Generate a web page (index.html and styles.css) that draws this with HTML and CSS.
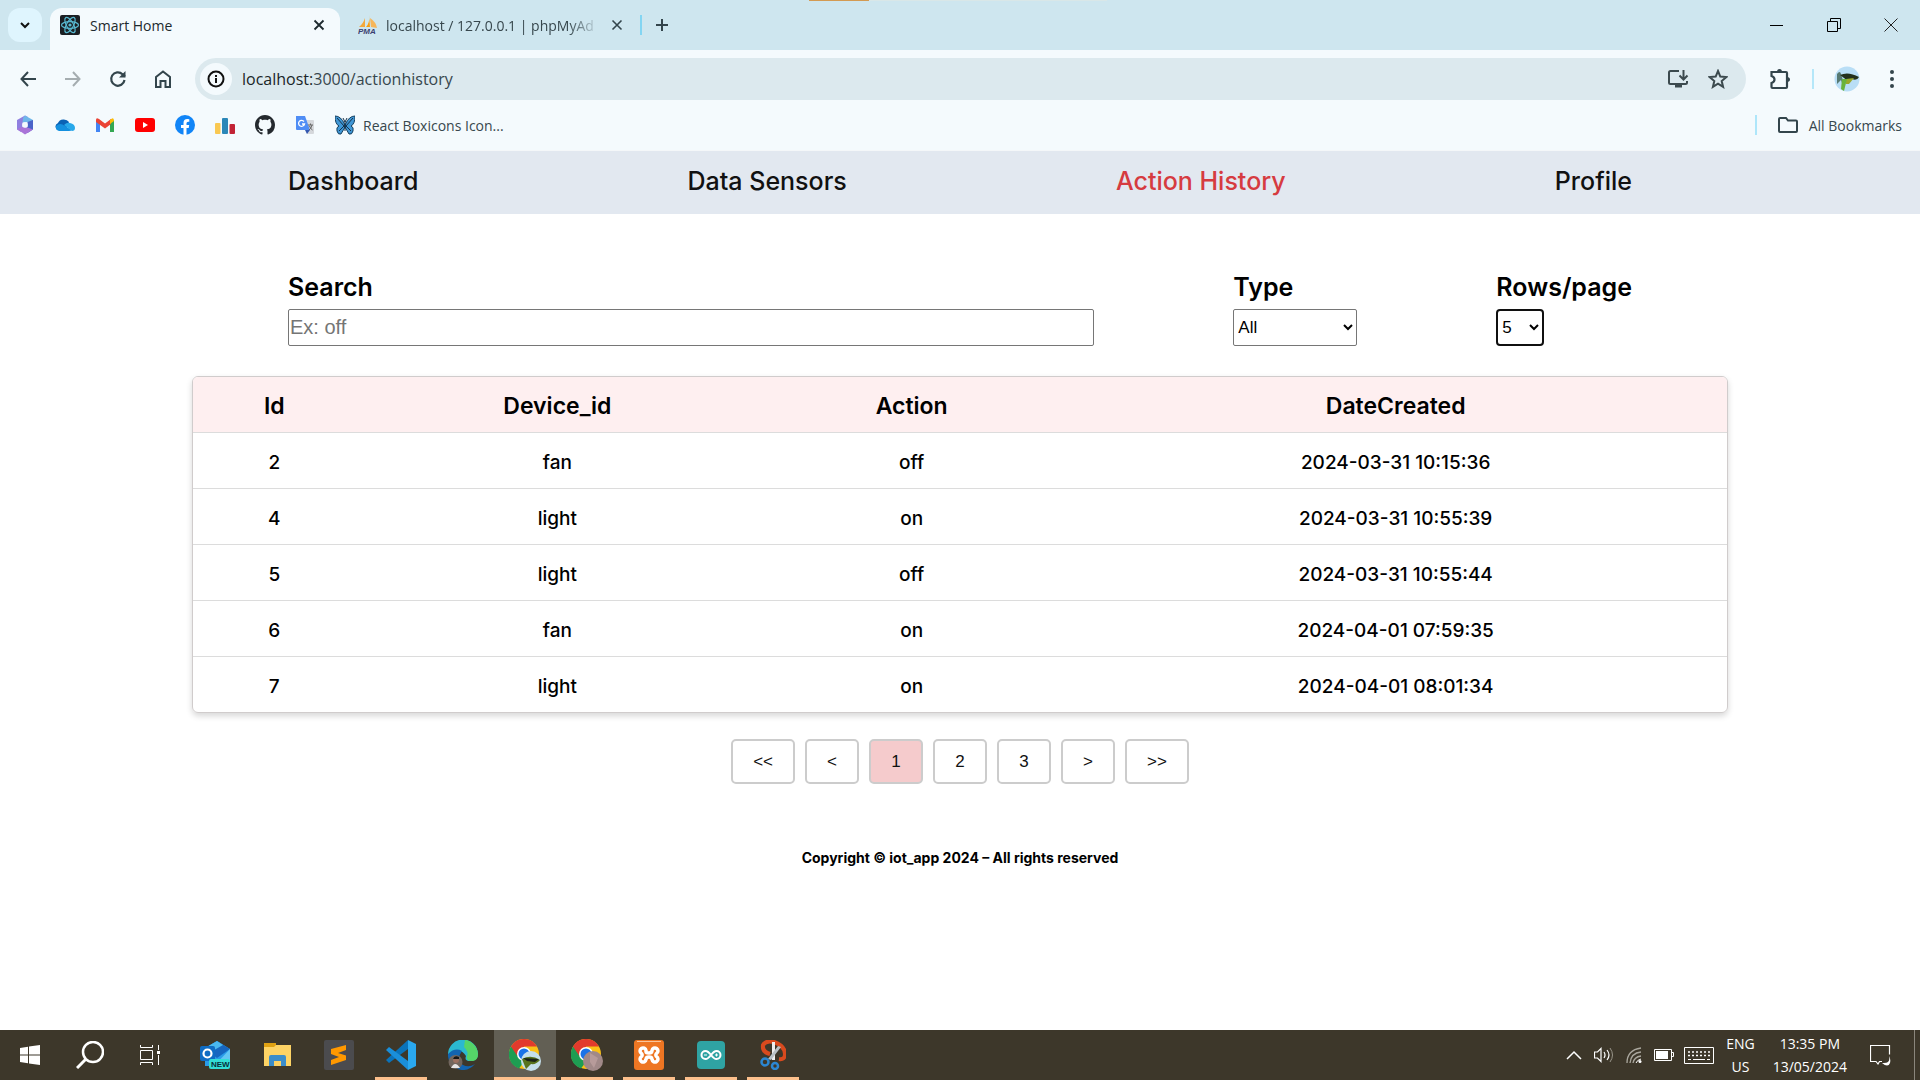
FILE: index.html
```html
<!DOCTYPE html>
<html lang="en">
<head>
<meta charset="utf-8">
<title>Smart Home</title>
<link rel="stylesheet" href="styles.css">
</head>
<body>
<header class="browser">
  <div class="tabstrip">
    <button class="tab-search" aria-label="Search tabs"><svg width="12" height="12" viewBox="0 0 12 12"><path d="M2 4l4 4 4-4" fill="none" stroke="#111" stroke-width="2"/></svg></button>
    <div class="tab tab-active">
      <svg width="20" height="20" viewBox="0 0 20 20"><rect width="20" height="20" rx="2" fill="#1b1f23"/><g fill="none" stroke="#58b9d0" stroke-width="1.2"><ellipse cx="10" cy="10" rx="8.5" ry="3.4"/><ellipse cx="10" cy="10" rx="8.5" ry="3.4" transform="rotate(60 10 10)"/><ellipse cx="10" cy="10" rx="8.5" ry="3.4" transform="rotate(120 10 10)"/></g><circle cx="10" cy="10" r="1.6" fill="#58b9d0"/></svg>
      <span class="tab-title">Smart Home</span>
      <button class="tab-close" aria-label="Close tab"><svg width="12" height="12" viewBox="0 0 12 12"><path d="M1.500 1.500l9 9M10.500 1.500l-9 9" stroke="#1d2a2e" stroke-width="1.800"/></svg></button>
    </div>
    <div class="tab">
      <svg width="20" height="20" viewBox="0 0 20 20"><path d="M7 3v9H1q4-3 6-9z" fill="#f3a83c"/><path d="M11 0q1 8-3 12h4z" fill="#f89c0e"/><path d="M12 3q6 4 7 10l-6-1z" fill="#f6b65a"/><text x="0" y="19" font-size="8" font-weight="700" font-style="italic" font-family="Liberation Sans, sans-serif" fill="#3a3f70">PMA</text></svg>
      <span class="tab-title tab-fade">localhost / 127.0.0.1 | phpMyAd</span>
      <button class="tab-close" aria-label="Close tab"><svg width="12" height="12" viewBox="0 0 12 12"><path d="M1.500 1.500l9 9M10.500 1.500l-9 9" stroke="#33454c" stroke-width="1.600"/></svg></button>
    </div>
    <span class="tab-sep"></span>
    <button class="new-tab" aria-label="New tab"><svg width="14" height="14" viewBox="0 0 14 14"><path d="M7 1v12M1 7h12" stroke="#33454c" stroke-width="2"/></svg></button>
    <div class="capture"></div>
    <div class="window-controls">
      <button aria-label="Minimize"><svg width="14" height="14" viewBox="0 0 14 14"><path d="M0 7.500h13" stroke="#000"/></svg></button>
      <button aria-label="Restore"><svg width="14" height="14" viewBox="0 0 14 14"><path d="M.5 3.500h10v10H.5zM3.500 3V.5h10v10H11" fill="none" stroke="#000"/></svg></button>
      <button aria-label="Close"><svg width="14" height="14" viewBox="0 0 14 14"><path d="M.5.5l13 13M13.500.5l-13 13" stroke="#222"/></svg></button>
    </div>
  </div>

  <div class="toolbar">
    <button class="tool" aria-label="Back"><svg width="16" height="16" viewBox="0 0 16 16"><path d="M16 8H2M8 1L1.500 8 8 15" fill="none" stroke="#33454c" stroke-width="2"/></svg></button>
    <button class="tool" aria-label="Forward"><svg width="16" height="16" viewBox="0 0 16 16"><path d="M0 8h14M8 1l6.500 7L8 15" fill="none" stroke="#a5adb0" stroke-width="2"/></svg></button>
    <button class="tool" aria-label="Reload"><svg width="18" height="18" viewBox="0 0 18 18"><path d="M15.500 10A6.700 6.700 0 1 1 13.500 4.200L16 6.500" fill="none" stroke="#33454c" stroke-width="2.200"/><path d="M16.500 1v6.500H10z" fill="#33454c"/></svg></button>
    <button class="tool" aria-label="Home"><svg width="18" height="18" viewBox="0 0 18 18"><path d="M2 7l7-5.500L16 7v10h-4.500v-6h-5v6H2z" fill="none" stroke="#33454c" stroke-width="2"/></svg></button>
    <div class="omnibox">
      <button class="site-info" aria-label="Site information"><svg width="18" height="18" viewBox="0 0 18 18"><circle cx="9" cy="9" r="7.500" fill="none" stroke="#111" stroke-width="2"/><path d="M9 8v5M9 5v2" stroke="#111" stroke-width="2"/></svg></button>
      <span class="url"><b>localhost:</b>3000/actionhistory</span>
      <button class="omni-btn" aria-label="Install app"><svg width="22" height="20" viewBox="0 0 22 20"><path d="M12 2H3.500q-1.500 0-1.500 1.500v10q0 1.500 1.500 1.500h15q1.500 0 1.500-1.500V12" fill="none" stroke="#3c4a4e" stroke-width="2"/><path d="M8 15h7v3.500H8z" fill="#3c4a4e"/><path d="M16.500 1v9M12.500 6.500l4 4 4-4" fill="none" stroke="#3c4a4e" stroke-width="2"/></svg></button>
      <button class="omni-btn" aria-label="Bookmark this tab"><svg width="20" height="20" viewBox="0 0 20 20"><path d="M10 2l2.300 5.600 6 .5-4.600 3.900 1.400 5.900-5.100-3.200-5.100 3.200L6.300 12 1.700 8.100l6-.5z" fill="none" stroke="#3c4a4e" stroke-width="2"/></svg></button>
    </div>
    <button class="extensions" aria-label="Extensions"><svg width="22" height="22" viewBox="0 0 22 22"><path d="M2.500 4h14.500q1 0 1 1v14q0 1-1 1h-13.500q-1 0-1-1v-4q3-1 3-3.500t-3-3.500z" fill="none" stroke="#33454c" stroke-width="2.200"/><path d="M8 4a2.500 3 0 0 1 5 0zM18 9a3 2.500 0 0 1 0 5z" fill="#33454c"/></svg></button>
    <span class="tool-sep"></span>
    <button class="avatar" aria-label="Profile menu"><svg width="26" height="26" viewBox="0 0 26 26"><circle cx="13" cy="13" r="12.500" fill="#b9def6"/><path d="M3 8q3-4 4 0 3 8 2 12l-2-6-4 4z" fill="#587a72"/><path d="M6 9q8-4 19 2-2 4-7 2-6 2-8-1z" fill="#23301c"/><path d="M12 13l8-1-5 6h-3z" fill="#9aa82c"/><path d="M8 13h5l-3 12-3-2z" fill="#69b33c"/></svg></button>
    <button class="menu" aria-label="Menu"><svg width="6" height="20" viewBox="0 0 6 20"><g fill="#33454c"><circle cx="3" cy="3" r="2"/><circle cx="3" cy="10" r="2"/><circle cx="3" cy="17" r="2"/></g></svg></button>
  </div>

  <div class="bookmarks">
    <a href="#" aria-label="Microsoft 365"><svg width="20" height="20" viewBox="0 0 20 20"><path d="M10 .5L2 5v9.500L6 17l1.500-4.500v-5L13 5V2z" fill="#8f7fe0"/><path d="M10 .5L18 5v5.500l-5.500-3.500-5 .5L8 3z" fill="#6fb7ea"/><path d="M18 5v9.500l-5.500 3.500-5-2.500 5-3.500V7z" fill="#4a63c8"/><path d="M2 14l5.500-2 5 .5 5.500 2-8 5z" fill="#a974d8"/><circle cx="10" cy="10" r="2.800" fill="#f4fafd"/></svg></a>
    <a href="#" aria-label="OneDrive"><svg width="20" height="20" viewBox="0 0 20 20"><path d="M3 15a5 4 0 0 1 0-7 6 5 0 0 1 11-1l-3 8z" fill="#0a62b5"/><path d="M4 16q-4-1-3-5 4-4 9 0l7 4q-1 1-3 1z" fill="#1490df"/><path d="M9 10q3-3 6-2 5 1 5 5 0 3-3 3z" fill="#28a8ea"/></svg></a>
    <a href="#" aria-label="Gmail"><svg width="20" height="20" viewBox="0 0 20 20"><path d="M1 5v12h4V8z" fill="#4285f4"/><path d="M15 8v9h4V5z" fill="#34a853"/><path d="M1 5q0-3 3-1l6 4.500L16 4v5l-6 4.500L1 7z" fill="#ea4335"/><path d="M15 5q4-4 4 1L15 9z" fill="#fbbc04"/></svg></a>
    <a href="#" aria-label="YouTube"><svg width="20" height="20" viewBox="0 0 20 20"><rect y="3" width="20" height="14" rx="3" fill="#f00"/><path d="M8 7l5 3-5 3z" fill="#fff"/></svg></a>
    <a href="#" aria-label="Facebook"><svg width="20" height="20" viewBox="0 0 20 20"><circle cx="10" cy="10" r="10" fill="#1185f7"/><path d="M8.500 20v-7H6v-3h2.500V8q0-4 3.800-4l2 .2v2.500h-1.200q-1.600 0-1.600 1.500V10h2.700l-.5 3h-2.200v7z" fill="#fff"/></svg></a>
    <a href="#" aria-label="Analytics"><svg width="20" height="20" viewBox="0 0 20 20"><rect y="8" width="5.500" height="11" rx="1" fill="#f9c851"/><rect x="7" y="3" width="6" height="16" rx="1" fill="#2b87b8"/><rect x="14.500" y="9" width="5.500" height="10" rx="1" fill="#c22335"/></svg></a>
    <a href="#" aria-label="GitHub"><svg width="20" height="20" viewBox="0 0 16 16"><path fill="#24292e" d="M8 0C3.580 0 0 3.580 0 8c0 3.540 2.290 6.530 5.470 7.590.4.070.55-.17.55-.38 0-.19-.01-.82-.01-1.490-2.010.37-2.530-.49-2.690-.94-.09-.23-.48-.94-.82-1.130-.28-.15-.68-.52-.01-.53.63-.01 1.080.58 1.230.82.72 1.210 1.870.87 2.330.66.07-.52.28-.87.51-1.070-1.780-.2-3.640-.89-3.640-3.950 0-.87.31-1.590.82-2.150-.08-.2-.36-1.020.08-2.120 0 0 .67-.21 2.200.82.640-.18 1.320-.27 2-.27s1.360.09 2 .27c1.530-1.040 2.200-.82 2.200-.82.440 1.100.16 1.920.08 2.120.51.56.82 1.270.82 2.150 0 3.070-1.870 3.750-3.650 3.950.29.25.54.73.54 1.480 0 1.070-.01 1.930-.01 2.200 0 .21.150.46.550.38A8.010 8.010 0 0 0 16 8c0-4.420-3.580-8-8-8z"/></svg></a>
    <a href="#" aria-label="Translate"><svg width="20" height="20" viewBox="0 0 20 20"><path d="M8 5h10q1 0 1 1v12q0 1-1 1h-6z" fill="#d5d8dc"/><path d="M1 1h9l5 14H2q-1 0-1-1z" fill="#4f8df5"/><path d="M10 15h5l-3 4z" fill="#3257b0"/><path d="M9 6.500A3 3 0 1 0 9.500 9H7" fill="none" stroke="#fff" stroke-width="1.300"/><path d="M13 10h5M15.500 8.500V10M17 10q-1 4-3 5M14.500 11q1 3 3 4" fill="none" stroke="#666" stroke-width="1"/></svg></a>
    <a href="#" class="bookmark-named"><svg width="20" height="20" viewBox="0 0 20 20"><path d="M9.500 9Q6 1 0 1q0 8 4 10-3 1-2 5t4 3l3.500-6zM10.500 9Q14 1 20 1q0 8-4 10 3 1 2 5t-4 3l-3.500-6z" fill="#3f97d6" stroke="#17405f"/><path d="M2 3l7 8M18 3l-7 8M4 16l5-5M16 16l-5-5M10 6v10M8 3l2 4 2-4" fill="none" stroke="#17324a"/></svg><span>React Boxicons Icon...</span></a>
    <span class="bm-sep"></span>
    <button class="all-bookmarks"><svg width="22" height="18" viewBox="0 0 22 18"><path d="M2 3q0-1 1-1h6l2 2.500h8q1 0 1 1V15q0 1-1 1H3q-1 0-1-1z" fill="none" stroke="#33454c" stroke-width="2"/></svg><span>All Bookmarks</span></button>
  </div>
</header>

<div class="app">
  <nav class="nav">
    <a href="#">Dashboard</a>
    <a href="#">Data Sensors</a>
    <a href="#" class="current">Action History</a>
    <a href="#">Profile</a>
  </nav>
  <main>
    <form class="filters">
      <div class="field field-search"><label for="search">Search</label><input id="search" type="text" placeholder="Ex: off"></div>
      <div class="field"><label for="type">Type</label><select id="type" class="type"><option>All</option><option>Device_id</option><option>Action</option></select></div>
      <div class="field"><label for="rows">Rows/page</label><select id="rows" class="rows"><option>5</option><option>10</option></select></div>
    </form>
    <div class="table-card">
      <table>
        <colgroup><col class="col-id"><col class="col-device"><col class="col-action"><col></colgroup>
        <thead><tr><th>Id</th><th>Device_id</th><th>Action</th><th>DateCreated</th></tr></thead>
        <tbody>
          <tr><td>2</td><td>fan</td><td>off</td><td>2024-03-31 10:15:36</td></tr>
          <tr><td>4</td><td>light</td><td>on</td><td>2024-03-31 10:55:39</td></tr>
          <tr><td>5</td><td>light</td><td>off</td><td>2024-03-31 10:55:44</td></tr>
          <tr><td>6</td><td>fan</td><td>on</td><td>2024-04-01 07:59:35</td></tr>
          <tr><td>7</td><td>light</td><td>on</td><td>2024-04-01 08:01:34</td></tr>
        </tbody>
      </table>
    </div>
    <div class="pagination">
      <button>&lt;&lt;</button><button>&lt;</button><button class="page-current">1</button><button>2</button><button>3</button><button>&gt;</button><button>&gt;&gt;</button>
    </div>
  </main>
  <footer class="copyright">Copyright © iot_app 2024 – All rights reserved</footer>
</div>

<div class="taskbar">
  <div class="system">
    <button aria-label="Start"><svg width="20" height="20" viewBox="0 0 20 20"><path d="M0 3l8-1.200V9.500H0zM9 1.600L20 0v9.500H9zM0 10.500h8v7.700L0 17zM9 10.500h11V20L9 18.400z" fill="#fff"/></svg></button>
    <button aria-label="Search"><svg width="28" height="28" viewBox="0 0 28 28"><circle cx="17" cy="11" r="10" fill="none" stroke="#fff" stroke-width="2.500"/><path d="M10 18l-9 9" stroke="#fff" stroke-width="3"/></svg></button>
    <button aria-label="Task view"><svg width="20" height="20" viewBox="0 0 20 20"><path d="M.5 5.500h12v9H.5zM.5 0v2.500h12V0M.5 20v-2.500h12V20M18.500 0v5M18.500 10v10" fill="none" stroke="#fff"/><path d="M17 6h3v3h-3z" fill="#fff"/></svg></button>
  </div>
  <div class="apps">
    <button aria-label="Outlook"><svg width="30" height="30" viewBox="0 0 30 30"><path d="M5 8L17 1l13 8v17H5z" fill="#2a9be8"/><path d="M17 1l13 8-13 9L5 9z" fill="#1666c0"/><path d="M5 8L17 1l6 4-14 8z" fill="#49b8f0"/><path d="M30 9v17H14z" fill="#63c6f4"/><rect y="6" width="15" height="15" rx="2" fill="#0f6cc4"/><circle cx="7.500" cy="13.500" r="4" fill="none" stroke="#fff" stroke-width="2.200"/><rect x="9" y="19" width="21" height="10" rx="2" fill="#33ded5"/><text x="11" y="27" font-size="8" font-weight="700" font-family="Liberation Sans, sans-serif" fill="#06303a">NEW</text></svg></button>
    <button aria-label="File Explorer"><svg width="28" height="24" viewBox="0 0 28 24"><path d="M1 0h12v5H1z" fill="#dfa113"/><path d="M13 2h15v21H1V4h10z" fill="#fdd365"/><path d="M6 23v-9q0-2 2-2h13q2 0 2 2v9h-5v-5h-7v5z" fill="#3b8dca"/></svg></button>
    <button aria-label="Sublime Text"><svg width="30" height="30" viewBox="0 0 30 30"><rect width="30" height="30" rx="2" fill="#4b4b4e"/><path d="M7 9l15-4v5l-8 3 8 2.500V20L7 25v-5l8-3-8-3z" fill="#ff9800"/></svg></button>
    <button class="open" aria-label="Visual Studio Code"><svg width="30" height="30" viewBox="0 0 30 30"><path d="M22 0L0 20l3 3L22 9z" fill="#0a73ba"/><path d="M22 30L0 10l3-3 19 14z" fill="#1a8fda"/><path d="M22 0l8 4v22l-8 4z" fill="#2aa8ef"/></svg></button>
    <button aria-label="Edge"><svg width="30" height="30" viewBox="0 0 30 30"><path d="M0 15a15 15 0 0 1 30-1q0 7-8 7-6 0-4-5Q12 6 0 15z" fill="#2bb8d0"/><path d="M17 0a15 15 0 0 1 13 14q0 6-5 7-8 0-6-5 2-4-3-9z" fill="#55d468"/><path d="M0 14q7-7 14-3-6 8 1 14 6 3 12-1a15 15 0 0 1-27-10z" fill="#1264b0"/><circle cx="7.500" cy="22" r="7" fill="#71665e"/><path d="M3 28q4-8 9 0z" fill="#e6e5e5"/><circle cx="8" cy="20" r="3" fill="#9b7161"/><path d="M5 19q1-4 6-2v2z" fill="#171717"/></svg></button>
    <button class="open active" aria-label="Chrome"><svg width="32" height="32" viewBox="0 0 32 32"><circle cx="15" cy="15" r="15" fill="#fbc116"/><path d="M15 15L2 7.500a15 15 0 0 0 8 22l6-8z" fill="#1e9d52"/><path d="M2 7.500a15 15 0 0 1 26 0H15v8l-7 1z" fill="#e23a2d"/><circle cx="15" cy="15" r="7" fill="#fff"/><circle cx="15" cy="15" r="5.500" fill="#1a73e8"/><circle cx="22" cy="22" r="10" fill="#c4dfeb"/><path d="M13 20q9-5 18 1-4 5-9 4l-5 5-2-5z" fill="#58731d"/><path d="M14 19l16 1-4 3-8-1z" fill="#1b2418"/></svg></button>
    <button class="open" aria-label="Chrome, second profile"><svg width="32" height="32" viewBox="0 0 32 32"><circle cx="15" cy="15" r="15" fill="#fbc116"/><path d="M15 15L2 7.500a15 15 0 0 0 8 22l6-8z" fill="#1e9d52"/><path d="M2 7.500a15 15 0 0 1 26 0H15v8l-7 1z" fill="#e23a2d"/><circle cx="15" cy="15" r="7" fill="#fff"/><circle cx="15" cy="15" r="5.500" fill="#1a73e8"/><circle cx="22" cy="22" r="10" fill="#a18988"/><path d="M19 14l8 5-4 10-4-6z" fill="#b79b9a"/></svg></button>
    <button class="open" aria-label="XAMPP"><svg width="30" height="30" viewBox="0 0 30 30"><rect width="30" height="30" rx="3" fill="#ee7623"/><path d="M3 1.500h24" stroke="#f9c59b"/><path d="M12 11.500V10.500a3 3 0 1 0-4.500 3 2 2 0 0 1 0 3 3 3 0 1 0 4.500 3q0-2.500 3-2.500t3 2.500a3 3 0 1 0 4.500-3 2 2 0 0 1 0-3 3 3 0 1 0-4.500-3q0 2.500-3 2.500t-3-1.500z" fill="none" stroke="#fff" stroke-width="3.500"/></svg></button>
    <button class="open" aria-label="Arduino IDE"><svg width="28" height="28" viewBox="0 0 28 28"><rect width="28" height="28" rx="4" fill="#2fa3a3"/><path d="M14 14q-3-4-5.500-4a4 4 0 0 0 0 8q2.500 0 5.500-4 3-4 5.500-4a4 4 0 0 1 0 8Q17 18 14 14z" fill="none" stroke="#fff" stroke-width="2"/><path d="M7 14h3M18 14h3M19.500 12.500v3" stroke="#fff"/></svg></button>
    <button class="open" aria-label="Snip and Sketch"><svg width="26" height="30" viewBox="0 0 26 30"><path d="M10 14Q2 12 3 5q3-5 11-3 11 4 11 12 0 6-6 5" fill="none" stroke="#d94a1e" stroke-width="4"/><path d="M12 2l3 0v18h-3z" fill="#eee"/><path d="M21 7l-3-1-10 13 3 1z" fill="#b9c1c6"/><g fill="none" stroke="#2c87d3" stroke-width="2.500"><circle cx="5" cy="22" r="3.500"/><circle cx="15" cy="26" r="3"/></g></svg></button>
  </div>
  <div class="tray">
    <div class="tray-icons">
      <button aria-label="Hidden icons"><svg width="16" height="10" viewBox="0 0 16 10"><path d="M1 9l7-7 7 7" fill="none" stroke="#fff" stroke-width="1.500"/></svg></button>
      <button aria-label="Volume"><svg width="20" height="18" viewBox="0 0 20 18"><path d="M.5 6h3L7 2.500v13L3.500 12h-3zM10 6q2 3 0 6M13 4q4 5 0 10" fill="none" stroke="#fff" stroke-width="1.200"/><path d="M16 2q5 7 0 14" fill="none" stroke="#989489"/></svg></button>
      <button aria-label="Network"><svg width="16" height="16" viewBox="0 0 16 16"><g fill="none" stroke="#aaa79e" stroke-width="1.300"><path d="M1 16Q1 3 15 1M4 16Q5 6 15 5M7 16q1-6 8-7"/></g><path d="M10 16q1-3 5-4" fill="none" stroke="#fff"/><circle cx="14" cy="14.500" r="1.500" fill="#fff"/></svg></button>
      <button aria-label="Battery"><svg width="20" height="12" viewBox="0 0 20 12"><path d="M.5.500h17v11H.5zM17.500 3.500h2v4h-2" fill="none" stroke="#fff"/><path d="M2 2h12v8H2z" fill="#fff"/></svg></button>
    </div>
    <button class="keyboard" aria-label="Touch keyboard"><svg width="30" height="17" viewBox="0 0 30 17"><path d="M.5.500h29v16H.5z" fill="none" stroke="#fff"/><path d="M4 5h22M4 8.500h22" stroke="#fff" stroke-width="1.500" stroke-dasharray="2 2"/><path d="M4 12.500h3M9 12.500h12M23 12.500h3" stroke="#fff"/></svg></button>
    <div class="lang"><span>ENG</span><span>US</span></div>
    <div class="clock"><span>13:35 PM</span><span>13/05/2024</span></div>
    <button class="notify" aria-label="Notifications"><svg width="22" height="22" viewBox="0 0 22 22"><path d="M12 17.500H9.500L8 20l-2-2.500H.5V1.500h19v9" fill="none" stroke="#fff" stroke-width="1.200"/><path d="M19 12q2 8-7 7 6 5 8 0 1-4-1-7z" fill="#fff"/></svg></button>
    <span class="show-desktop"></span>
  </div>
</div>
</body>
</html>
```
FILE: styles.css
```css
* { box-sizing: border-box; }

body {
  margin: 0;
  min-height: 100vh;
  display: flex;
  flex-direction: column;
  background: #fff;
  color: #000;
  font-family: Inter, sans-serif;
}

button {
  padding: 0;
  border: 0;
  background: none;
  color: inherit;
  font: inherit;
}

a { color: inherit; text-decoration: none; }

svg { display: block; flex: none; }

/* Browser chrome */
.browser {
  background: #f4fafd;
  color: #37474d;
  font-family: "Open Sans", sans-serif;
  font-size: 14px;
  border-bottom: 1px solid #f4f7f9;
}

.tabstrip {
  position: relative;
  display: flex;
  align-items: center;
  height: 50px;
  padding-left: 8px;
  background: #cee6ef;
}

.tab-search {
  display: grid;
  place-items: center;
  width: 34px;
  height: 34px;
  margin-right: 8px;
  border-radius: 12px;
  background: #dff5fe;
}

.tab {
  display: flex;
  align-items: center;
  gap: 10px;
  width: 290px;
  height: 42px;
  padding: 0 12px 0 10px;
}

.tab-active {
  align-self: flex-end;
  padding-bottom: 8px;
  border-radius: 12px 12px 0 0;
  background: #f4fafd;
  color: #1d2a2e;
}

.tab + .tab { gap: 8px; width: 292px; padding: 0 6px 0 18px; }

.tab-title {
  flex: 1;
  min-width: 0;
  white-space: nowrap;
}

.tab-fade { mask-image: linear-gradient(to right, #000 85%, transparent); }

.tab-close { display: grid; place-items: center; width: 18px; height: 18px; }

.tab-sep { width: 2px; height: 20px; margin-left: 8px; background: #83d5f2; }

.new-tab { display: grid; place-items: center; width: 40px; height: 40px; }

.capture {
  position: absolute;
  top: 0;
  left: calc(50% - 151px);
  width: 298px;
  height: 1px;
  background: linear-gradient(to right, #d39a52 60px, #d9e7e8 60px);
}

.window-controls { display: flex; margin: 0 1px 0 auto; }

.window-controls button {
  display: grid;
  place-items: center;
  width: 57px;
  height: 50px;
}

.toolbar {
  display: flex;
  align-items: center;
  height: 58px;
  padding: 0 20px 0 5px;
}

.tool { display: grid; place-items: center; width: 45px; height: 42px; }

.omnibox {
  flex: 1;
  display: flex;
  align-items: center;
  gap: 4px;
  height: 42px;
  margin: 0 20px 0 10px;
  padding: 0 10px 0 5px;
  border-radius: 21px;
  background: #dce9ee;
  font-size: 16px;
}

.site-info {
  display: grid;
  place-items: center;
  width: 32px;
  height: 32px;
  margin-right: 6px;
  border-radius: 50%;
  background: #f4fafd;
}

.url { flex: 1; white-space: nowrap; }

.url b { color: #1a2528; font-weight: 400; }

.omni-btn { display: grid; place-items: center; width: 36px; height: 36px; }

.extensions { display: grid; place-items: center; width: 28px; height: 42px; }

.tool-sep { width: 2px; height: 20px; margin: 0 20px 0 18px; background: #b5e7f9; }

.avatar { width: 26px; margin-right: 24px; }

.menu { display: grid; place-items: center; width: 16px; height: 42px; }

.bookmarks {
  display: flex;
  align-items: center;
  gap: 20px;
  height: 42px;
  padding: 0 18px 8px 15px;
}

.bookmark-named { display: flex; align-items: center; gap: 8px; }

.bm-sep { width: 2px; height: 20px; margin-left: auto; background: #aee6fa; }

.all-bookmarks { display: flex; align-items: center; gap: 10px; }

/* Application */
.app { flex: 1; }

.nav {
  display: flex;
  justify-content: space-between;
  padding: 16px 15% 18px;
  background: #e2e8f0;
  color: #111;
  font-size: 25px;
  font-weight: 500;
  line-height: 29px;
}

.nav .current { color: #d63b40; }

.filters {
  display: flex;
  justify-content: space-between;
  padding: 58px 15% 30px;
}

.field { display: flex; flex-direction: column; align-items: flex-start; }

.field-search { width: 60%; }

.field label {
  margin-bottom: 6px;
  font-size: 25px;
  font-weight: 600;
  line-height: 31px;
}

.field input,
.field select {
  height: 37px;
  border: 1px solid #767676;
  border-radius: 2px;
  background: #fff;
  color: #000;
  font-family: "Liberation Sans", sans-serif;
}

.field input { width: 100%; padding: 1px; font-size: 20px; }

.field input::placeholder { color: #757575; }

.field select { font-size: 17px; }

.field .type { width: 124px; }

.field .rows { width: 48px; border: 2px solid #101010; border-radius: 4px; }

.table-card {
  margin: 0 10%;
  overflow: hidden;
  border: 1px solid #d0cccc;
  border-radius: 6px;
  box-shadow: 0 3px 6px rgba(0, 0, 0, 0.16);
}

table {
  width: 100%;
  border-collapse: collapse;
  table-layout: fixed;
  font-size: 19px;
  font-weight: 500;
}

.col-id { width: 10.6%; }
.col-device { width: 26.3%; }
.col-action { width: 19.9%; }

th,
td {
  height: 56px;
  padding: 4px 0 0;
  border-bottom: 1px solid #dcdcdc;
  text-align: center;
}

tbody tr:last-child td { border-bottom: 0; }

th { height: 55px; background: #feeff0; font-size: 23px; font-weight: 600; }

.pagination {
  display: flex;
  justify-content: center;
  gap: 10px;
  margin-top: 26px;
}

.pagination button {
  min-width: 54px;
  height: 45px;
  padding: 0 20px;
  border: 2px solid #ccc;
  border-radius: 5px;
  background: #fff;
  color: #111;
  font-family: "Liberation Sans", sans-serif;
  font-size: 17px;
}

.pagination .page-current { background: #f5cbcc; }

.copyright {
  margin-top: 64px;
  text-align: center;
  font-size: 14px;
  font-weight: 700;
  line-height: 20px;
}

/* Taskbar */
.taskbar {
  display: flex;
  height: 50px;
  background: #3d372a;
  color: #fff;
  font-family: "Open Sans", sans-serif;
  font-size: 14px;
}

.system { display: flex; margin-right: 4px; }

.system button { display: grid; place-items: center; width: 60px; }

.apps { display: flex; }

.apps button {
  display: grid;
  place-items: center;
  width: 62px;
  height: 50px;
}

.apps .open {
  background: linear-gradient(#fdc08c, #fdc08c) center bottom / 52px 3px no-repeat;
}

.apps .active {
  background: linear-gradient(#fdc08c, #fdc08c) center bottom / 62px 3px no-repeat, #625f54;
}

.tray {
  display: flex;
  align-items: center;
  gap: 10px;
  margin-left: auto;
}

.tray-icons { display: flex; align-items: center; gap: 12px; }

.keyboard { margin-right: 2px; }

.lang,
.clock {
  display: flex;
  flex-direction: column;
  align-items: center;
  line-height: 23px;
}

.clock { margin: 0 13px 0 8px; }

.notify { margin-right: 12px; }

.show-desktop { width: 6px; height: 50px; border-left: 1px solid #8a867c; }
```
